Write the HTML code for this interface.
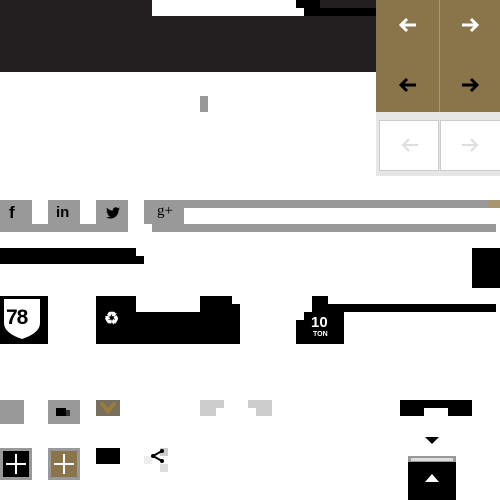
<!DOCTYPE html>
<html><head><style>
body{margin:0;width:500px;height:500px;background:#fff;position:relative;overflow:hidden;font-family:"Liberation Sans",sans-serif}
div,svg{position:absolute}
.k{background:#000}.g{background:#999}
</style></head><body>
<div style="left:0;top:0;width:376px;height:72px;background:#231f20"></div>
<div style="left:152px;top:0;width:152px;height:16px;background:#fff"></div>
<div class="k" style="left:296px;top:0;width:24px;height:8px"></div>
<div class="k" style="left:304px;top:8px;width:72px;height:8px"></div>
<div style="left:376px;top:0;width:124px;height:112px;background:#8a7449"></div>
<div style="left:439px;top:0;width:1px;height:112px;background:#a8966e"></div>
<svg style="left:398px;top:17px" width="20" height="16"><path d="M18 8H3M9 2L3 8l6 6" stroke="#fff" stroke-width="3" fill="none"/></svg>
<svg style="left:460px;top:17px" width="20" height="16"><path d="M2 8h15M11 2l6 6-6 6" stroke="#fff" stroke-width="3" fill="none"/></svg>
<svg style="left:398px;top:77px" width="20" height="16"><path d="M18 8H3M9 2L3 8l6 6" stroke="#000" stroke-width="3" fill="none"/></svg>
<svg style="left:460px;top:77px" width="20" height="16"><path d="M2 8h15M11 2l6 6-6 6" stroke="#000" stroke-width="3" fill="none"/></svg>
<div style="left:376px;top:112px;width:124px;height:64px;background:#e6e6e6"></div>
<div style="left:379px;top:120px;width:58px;height:49px;background:#fff;border:1px solid #ccc"></div>
<div style="left:440px;top:120px;width:59px;height:49px;background:#fff;border:1px solid #ccc"></div>
<svg style="left:400px;top:137px" width="20" height="16"><path d="M18 8H3M9 2L3 8l6 6" stroke="#ddd" stroke-width="2" fill="none"/></svg>
<svg style="left:460px;top:137px" width="20" height="16"><path d="M2 8h15M11 2l6 6-6 6" stroke="#ddd" stroke-width="2" fill="none"/></svg>
<div class="g" style="left:200px;top:96px;width:8px;height:16px"></div>
<div class="g" style="left:0;top:200px;width:32px;height:24px"></div>
<div class="g" style="left:48px;top:200px;width:32px;height:24px"></div>
<div class="g" style="left:96px;top:200px;width:32px;height:24px"></div>
<div class="g" style="left:0;top:224px;width:128px;height:8px"></div>
<div class="g" style="left:144px;top:200px;width:40px;height:24px"></div>
<div class="g" style="left:144px;top:200px;width:344px;height:8px"></div>
<div style="left:488px;top:200px;width:12px;height:8px;background:#a8966e"></div>
<div class="g" style="left:152px;top:224px;width:344px;height:8px"></div>
<div style="left:9px;top:203px;font-weight:bold;font-size:17px">f</div>
<div style="left:56px;top:204px;font-weight:bold;font-size:15px">in</div>
<svg style="left:106px;top:207px" width="14" height="12" viewBox="0 0 24 20"><path d="M24 2.4a10 10 0 01-2.8.8A5 5 0 0023.3.4a10 10 0 01-3.1 1.2A5 5 0 0011.8 6 14 14 0 011.7.9a5 5 0 001.5 6.6 5 5 0 01-2.2-.6 5 5 0 004 4.9 5 5 0 01-2.2.1 5 5 0 004.6 3.4A10 10 0 010 17.3 14 14 0 007.5 19.5c9 0 14-7.5 14-14v-.6A10 10 0 0024 2.4z"/></svg>
<div style="left:157px;top:203px;font-family:'Liberation Serif';font-size:15px">g+</div>
<div class="k" style="left:0;top:248px;width:136px;height:16px"></div>
<div class="k" style="left:136px;top:256px;width:8px;height:8px"></div>
<div class="k" style="left:472px;top:248px;width:28px;height:40px"></div>
<div class="k" style="left:0;top:296px;width:48px;height:48px"></div>
<svg style="left:2px;top:298px" width="40" height="42" viewBox="0 0 40 42"><path d="M2 1h36v3q0 3 0 5v16q0 10-18 16Q2 35 2 25V9q0-3 0-5z" fill="#fff"/></svg>
<div style="left:6px;top:306px;font-weight:bold;font-size:21px;letter-spacing:-1px">78</div>
<div class="k" style="left:96px;top:296px;width:40px;height:48px"></div>
<div class="k" style="left:136px;top:312px;width:64px;height:32px"></div>
<div class="k" style="left:200px;top:296px;width:32px;height:48px"></div>
<div class="k" style="left:232px;top:304px;width:8px;height:40px"></div>
<div style="left:104px;top:309px;color:#fff;font-size:17px;font-weight:bold">&#x267B;&#xFE0E;</div>
<div class="k" style="left:312px;top:296px;width:16px;height:16px"></div>
<div class="k" style="left:328px;top:304px;width:168px;height:8px"></div>
<div class="k" style="left:304px;top:312px;width:40px;height:32px"></div>
<div class="k" style="left:296px;top:320px;width:8px;height:24px"></div>
<div style="left:311px;top:314px;color:#fff;font-weight:bold;font-size:15px">10</div>
<div style="left:313px;top:331px;color:#fff;font-weight:bold;font-size:7px">TON</div>
<div class="g" style="left:0;top:400px;width:24px;height:24px"></div>
<div class="g" style="left:48px;top:400px;width:32px;height:24px"></div>
<div class="k" style="left:56px;top:408px;width:10px;height:8px"></div>
<div style="left:66px;top:410px;width:4px;height:6px;background:#333"></div>
<div style="left:96px;top:400px;width:24px;height:16px;background:#77705f"></div>
<svg style="left:98px;top:401px" width="20" height="14"><path d="M3 2l7 8 7-8" stroke="#9a7d3a" stroke-width="4" fill="none"/></svg>
<div style="left:200px;top:400px;width:24px;height:8px;background:#ccc"></div>
<div style="left:200px;top:408px;width:16px;height:8px;background:#ccc"></div>
<div style="left:248px;top:400px;width:24px;height:8px;background:#ccc"></div>
<div style="left:256px;top:408px;width:16px;height:8px;background:#ccc"></div>
<div class="k" style="left:400px;top:400px;width:72px;height:8px"></div>
<div class="k" style="left:400px;top:408px;width:24px;height:8px"></div>
<div class="k" style="left:448px;top:408px;width:24px;height:8px"></div>
<div style="left:425px;top:437px;width:0;height:0;border-left:7px solid transparent;border-right:7px solid transparent;border-top:7px solid #000"></div>
<div class="g" style="left:0;top:448px;width:32px;height:32px"></div>
<div class="k" style="left:3px;top:451px;width:26px;height:26px"></div>
<div style="left:6px;top:463px;width:20px;height:2px;background:#fff"></div>
<div style="left:15px;top:454px;width:2px;height:20px;background:#fff"></div>
<div class="g" style="left:48px;top:448px;width:32px;height:32px"></div>
<div style="left:51px;top:451px;width:26px;height:26px;background:#8a7449"></div>
<div style="left:54px;top:463px;width:20px;height:2px;background:#fff"></div>
<div style="left:63px;top:454px;width:2px;height:20px;background:#fff"></div>
<div class="k" style="left:96px;top:448px;width:24px;height:16px"></div>
<div style="left:144px;top:448px;width:24px;height:24px;background:#fff"></div>
<div style="left:144px;top:456px;width:8px;height:8px;background:#eee"></div>
<div style="left:160px;top:464px;width:8px;height:8px;background:#ddd"></div>
<div style="left:160px;top:448px;width:8px;height:8px;background:#ccc"></div>
<svg style="left:150px;top:448px" width="16" height="16"><g stroke="#000" stroke-width="2"><line x1="3" y1="8" x2="12" y2="3"/><line x1="3" y1="8" x2="12" y2="13"/></g><circle cx="3" cy="8" r="2"/><circle cx="12" cy="3" r="2"/><circle cx="12" cy="13" r="2"/></svg>
<div class="g" style="left:408px;top:456px;width:48px;height:6px"></div>
<div style="left:411px;top:458px;width:42px;height:3px;background:#ddd"></div>
<div class="k" style="left:408px;top:462px;width:48px;height:38px"></div>
<div style="left:425px;top:474px;width:0;height:0;border-left:7px solid transparent;border-right:7px solid transparent;border-bottom:8px solid #fff"></div>
</body></html>
